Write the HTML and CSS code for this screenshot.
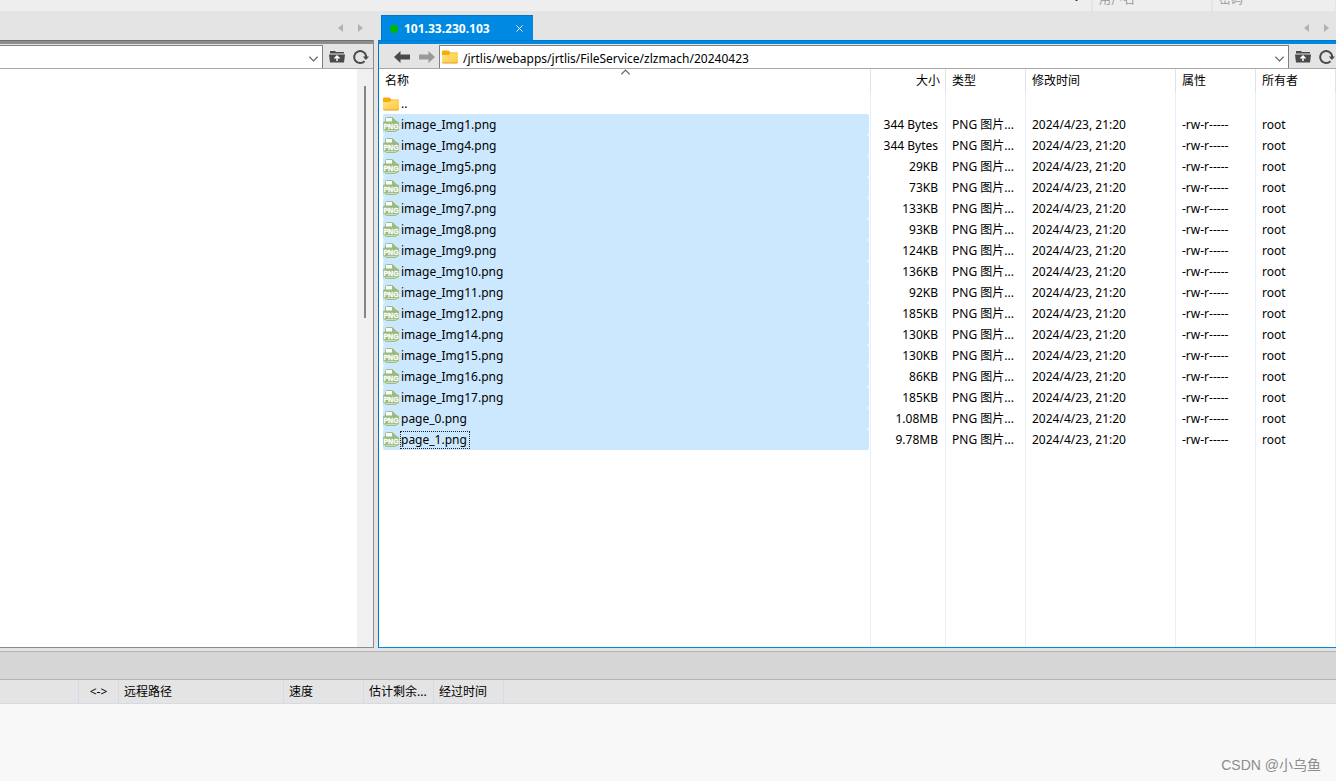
FILE: index.html
```html
<!DOCTYPE html>
<html lang="zh-CN">
<head>
<meta charset="utf-8">
<title>101.33.230.103</title>
<link rel="stylesheet" href="styles.css">
</head>
<body>
<svg class="sprite" aria-hidden="true">
  <defs>
    <linearGradient id="folder-fill" x1="0" y1="0" x2="1" y2="1">
      <stop offset="0" stop-color="#ffe28a"/>
      <stop offset="1" stop-color="#ffc93a"/>
    </linearGradient>
  </defs>
  <symbol id="folder" viewBox="0 0 16 14">
    <path d="M0 1.5Q0 .5 1 .5H6.500L8.500 2.500H15Q16 2.500 16 3.500V6H0Z" fill="#f5ac0c"/>
    <path d="M0 5H6.500L8.500 3.300H16V12Q16 13 15 13H1Q0 13 0 12Z" fill="url(#folder-fill)"/>
    <path d="M.3 12.500Q.5 13 1 13H15Q15.500 13 15.700 12.500" fill="none" stroke="#e0a020" stroke-width="1"/>
  </symbol>
  <symbol id="png" viewBox="0 0 16 16">
    <path d="M2.500 6V1.500Q2.500 .5 3.500 .5H9.500L13.500 4.500V14Q13.500 14.500 12.500 14.500H3.500Q2.500 14.500 2.500 14Z" fill="#fff" stroke="#9dbd83"/>
    <path d="M9 0L14 5H9Z" fill="#9dbd83"/>
    <rect x="0" y="4.500" width="16" height="9" rx="1.500" fill="#98ba7d"/>
    <text x="8" y="12" text-anchor="middle" class="png-label">PNG</text>
  </symbol>
  <symbol id="up" viewBox="0 0 16 13">
    <path d="M1 1H6L7 2H15V3.500H1Z" fill="#4a4a4a"/>
    <path d="M0 4.500H16L15 12.500H1Z" fill="#4a4a4a"/>
    <path d="M8 11V6.500M5.500 8.500L8 6L10.500 8.500" fill="none" stroke="#fff" stroke-width="1.500"/>
  </symbol>
  <symbol id="reload" viewBox="0 0 16 16">
    <path d="M11.500 12.300A6 6 0 1 1 13 6.500V8" fill="none" stroke="#4a4a4a" stroke-width="2"/>
    <path d="M9.800 7.500H16L12.900 11Z" fill="#4a4a4a"/>
  </symbol>
  <symbol id="back" viewBox="0 0 16 12">
    <path d="M0 6L6.500 0V3.500H16V8.500H6.500V12Z"/>
  </symbol>
  <symbol id="chevron" viewBox="0 0 8 5">
    <path d="M.3 .5L4 4.200L7.700 .5" fill="none" stroke="#666" stroke-width="1.100"/>
  </symbol>
  <symbol id="tri" viewBox="0 0 5 8">
    <path d="M0 4L5 0V8Z" fill="#b2b2b2"/>
  </symbol>
</svg>

<header class="quickbar">
  <button class="spin" aria-label="选项"><svg viewBox="0 0 3 1"><path d="M0 0H3L1.500 1Z"/></svg></button>
  <input class="field" type="text" placeholder="用户名" aria-label="用户名">
  <input class="field" type="password" placeholder="密码" aria-label="密码">
</header>

<main class="panes">
  <section class="pane">
    <div class="tabs">
      <div class="tab-nav">
        <button aria-label="上一个"><svg class="tri"><use href="#tri"/></svg></button>
        <button aria-label="下一个"><svg class="tri flip"><use href="#tri"/></svg></button>
      </div>
    </div>
    <div class="frame">
      <div class="toolbar">
        <div class="combo first">
          <input type="text" aria-label="本地路径">
          <button aria-label="展开"><svg class="chevron"><use href="#chevron"/></svg></button>
        </div>
        <button class="tool" aria-label="上级目录"><svg class="up"><use href="#up"/></svg></button>
        <button class="tool" aria-label="刷新"><svg class="reload"><use href="#reload"/></svg></button>
      </div>
      <div class="local-list"><div class="scrollbar"><div class="thumb"></div></div></div>
    </div>
  </section>

  <section class="pane active">
    <div class="tabs">
      <div class="tab"><span class="dot"></span><span class="host">101.33.230.103</span><button class="close" aria-label="关闭"><svg viewBox="0 0 7 7"><path d="M.5 .5L6.500 6.500M6.500 .5L.5 6.500"/></svg></button></div>
      <div class="tab-nav">
        <button aria-label="上一个"><svg class="tri"><use href="#tri"/></svg></button>
        <button aria-label="下一个"><svg class="tri flip"><use href="#tri"/></svg></button>
      </div>
    </div>
    <div class="frame">
      <div class="toolbar">
        <div class="history">
          <button aria-label="后退"><svg class="arrow"><use href="#back"/></svg></button>
          <button aria-label="前进"><svg class="arrow next flip"><use href="#back"/></svg></button>
        </div>
        <div class="combo">
          <svg class="folder"><use href="#folder"/></svg>
          <input type="text" aria-label="远程路径" value="/jrtlis/webapps/jrtlis/FileService/zlzmach/20240423">
          <button aria-label="展开"><svg class="chevron"><use href="#chevron"/></svg></button>
        </div>
        <button class="tool" aria-label="上级目录"><svg class="up"><use href="#up"/></svg></button>
        <button class="tool" aria-label="刷新"><svg class="reload"><use href="#reload"/></svg></button>
      </div>
      <div class="remote-list">
        <table class="files">
          <colgroup><col><col class="c-size"><col class="c-type"><col class="c-time"><col class="c-attr"><col class="c-owner"></colgroup>
          <thead><tr><th>名称<svg class="chevron sort"><use href="#chevron"/></svg></th><th class="num">大小</th><th>类型</th><th>修改时间</th><th>属性</th><th>所有者</th></tr></thead>
          <tbody>
            <tr><td><div class="name parent"><svg class="folder"><use href="#folder"/></svg><span>..</span></div></td><td></td><td></td><td></td><td></td><td></td></tr>
            <tr class="sel"><td><div class="name"><svg class="png"><use href="#png"/></svg><span>image_Img1.png</span></div></td><td class="num">344 Bytes</td><td>PNG 图片...</td><td>2024/4/23, 21:20</td><td>-rw-r-----</td><td>root</td></tr>
            <tr class="sel"><td><div class="name"><svg class="png"><use href="#png"/></svg><span>image_Img4.png</span></div></td><td class="num">344 Bytes</td><td>PNG 图片...</td><td>2024/4/23, 21:20</td><td>-rw-r-----</td><td>root</td></tr>
            <tr class="sel"><td><div class="name"><svg class="png"><use href="#png"/></svg><span>image_Img5.png</span></div></td><td class="num">29KB</td><td>PNG 图片...</td><td>2024/4/23, 21:20</td><td>-rw-r-----</td><td>root</td></tr>
            <tr class="sel"><td><div class="name"><svg class="png"><use href="#png"/></svg><span>image_Img6.png</span></div></td><td class="num">73KB</td><td>PNG 图片...</td><td>2024/4/23, 21:20</td><td>-rw-r-----</td><td>root</td></tr>
            <tr class="sel"><td><div class="name"><svg class="png"><use href="#png"/></svg><span>image_Img7.png</span></div></td><td class="num">133KB</td><td>PNG 图片...</td><td>2024/4/23, 21:20</td><td>-rw-r-----</td><td>root</td></tr>
            <tr class="sel"><td><div class="name"><svg class="png"><use href="#png"/></svg><span>image_Img8.png</span></div></td><td class="num">93KB</td><td>PNG 图片...</td><td>2024/4/23, 21:20</td><td>-rw-r-----</td><td>root</td></tr>
            <tr class="sel"><td><div class="name"><svg class="png"><use href="#png"/></svg><span>image_Img9.png</span></div></td><td class="num">124KB</td><td>PNG 图片...</td><td>2024/4/23, 21:20</td><td>-rw-r-----</td><td>root</td></tr>
            <tr class="sel"><td><div class="name"><svg class="png"><use href="#png"/></svg><span>image_Img10.png</span></div></td><td class="num">136KB</td><td>PNG 图片...</td><td>2024/4/23, 21:20</td><td>-rw-r-----</td><td>root</td></tr>
            <tr class="sel"><td><div class="name"><svg class="png"><use href="#png"/></svg><span>image_Img11.png</span></div></td><td class="num">92KB</td><td>PNG 图片...</td><td>2024/4/23, 21:20</td><td>-rw-r-----</td><td>root</td></tr>
            <tr class="sel"><td><div class="name"><svg class="png"><use href="#png"/></svg><span>image_Img12.png</span></div></td><td class="num">185KB</td><td>PNG 图片...</td><td>2024/4/23, 21:20</td><td>-rw-r-----</td><td>root</td></tr>
            <tr class="sel"><td><div class="name"><svg class="png"><use href="#png"/></svg><span>image_Img14.png</span></div></td><td class="num">130KB</td><td>PNG 图片...</td><td>2024/4/23, 21:20</td><td>-rw-r-----</td><td>root</td></tr>
            <tr class="sel"><td><div class="name"><svg class="png"><use href="#png"/></svg><span>image_Img15.png</span></div></td><td class="num">130KB</td><td>PNG 图片...</td><td>2024/4/23, 21:20</td><td>-rw-r-----</td><td>root</td></tr>
            <tr class="sel"><td><div class="name"><svg class="png"><use href="#png"/></svg><span>image_Img16.png</span></div></td><td class="num">86KB</td><td>PNG 图片...</td><td>2024/4/23, 21:20</td><td>-rw-r-----</td><td>root</td></tr>
            <tr class="sel"><td><div class="name"><svg class="png"><use href="#png"/></svg><span>image_Img17.png</span></div></td><td class="num">185KB</td><td>PNG 图片...</td><td>2024/4/23, 21:20</td><td>-rw-r-----</td><td>root</td></tr>
            <tr class="sel"><td><div class="name"><svg class="png"><use href="#png"/></svg><span>page_0.png</span></div></td><td class="num">1.08MB</td><td>PNG 图片...</td><td>2024/4/23, 21:20</td><td>-rw-r-----</td><td>root</td></tr>
            <tr class="sel"><td><div class="name"><svg class="png"><use href="#png"/></svg><span class="focus">page_1.png</span></div></td><td class="num">9.78MB</td><td>PNG 图片...</td><td>2024/4/23, 21:20</td><td>-rw-r-----</td><td>root</td></tr>
            <tr class="filler"><td></td><td></td><td></td><td></td><td></td><td></td></tr>
          </tbody>
        </table>
      </div>
    </div>
  </section>
</main>

<footer class="queue">
  <div class="queue-bar"></div>
  <table class="transfers">
    <colgroup><col class="q-local"><col class="q-dir"><col class="q-remote"><col class="q-speed"><col class="q-left"><col class="q-time"><col></colgroup>
    <thead><tr><th></th><th class="dir">&lt;-&gt;</th><th>远程路径</th><th>速度</th><th>估计剩余...</th><th>经过时间</th><th></th></tr></thead>
  </table>
  <div class="watermark">CSDN @小乌鱼</div>
</footer>
</body>
</html>
```
FILE: styles.css
```css
*, *::before { box-sizing: border-box; }

body {
  margin: 0;
  height: 100vh;
  display: flex;
  flex-direction: column;
  overflow: hidden;
  background: #e4e4e4;
  color: #000;
  font: 12px/16px "Noto Sans", "Noto Sans CJK SC", sans-serif;
}

button, input { font: inherit; color: inherit; border: 0; padding: 0; margin: 0; background: none; }
button { display: flex; align-items: center; justify-content: center; }
input { min-width: 0; outline: 0; }
svg { display: block; flex: none; }

.sprite { position: absolute; width: 0; height: 0; }
.png-label { font: bold 7px "Liberation Sans", sans-serif; fill: #fff; stroke: #fff; stroke-width: .3px; }
.flip { transform: scaleX(-1); }

/* Quick connect strip */
.quickbar {
  height: 11px;
  flex: none;
  display: flex;
  justify-content: flex-end;
  align-items: flex-end;
  overflow: hidden;
  background: #eee;
  padding-right: 4px;
  border-right: 1px solid #e4e4e4;
}
.quickbar .field { width: 120px; height: 24px; padding: 0 6px; border-left: 2px solid #e4e4e4; }
.quickbar .field::placeholder { color: #999; opacity: 1; }
.spin { height: 11px; width: 30px; align-items: flex-start; }
.spin svg { width: 3px; height: 1px; }

/* Panes */
.panes {
  flex: 1;
  min-height: 0;
  display: grid;
  grid-template-columns: 374fr 958fr;
  gap: 4px;
}
.pane { display: flex; flex-direction: column; min-width: 0; min-height: 0; --edge: #8c8c8c; --edge-dark: #707070; }
.pane.active { --edge: #0089e3; --edge-dark: #0078c8; }

.tabs { height: 29px; flex: none; display: flex; align-items: flex-end; padding-left: 3px; }
.tab-nav { margin-left: auto; display: flex; gap: 15px; padding-right: 11px; height: 25px; align-items: center; }
.active .tab-nav { padding-right: 7px; }
.tri { width: 5px; height: 8px; }

.tab {
  width: 152px;
  height: 25px;
  display: flex;
  align-items: center;
  padding: 1px 10px 0 8px;
  background: #0089e3;
  border: solid #0078c8;
  border-width: 1px 0 0 1px;
  color: #fff;
  font-weight: bold;
}
.dot { width: 8px; height: 8px; border-radius: 50%; background: #00b800; margin-right: 6px; }
.close { margin-left: auto; }
.close svg { width: 7px; height: 7px; fill: none; stroke: #fff; }

.frame {
  flex: 1;
  min-height: 0;
  display: flex;
  flex-direction: column;
  border: 1px solid var(--edge);
  border-left: 0;
  border-top: 0;
}
.frame::before { content: ""; height: 4px; flex: none; background: var(--edge); border-top: 1px solid var(--edge-dark); }
.active .frame { border-right: 0; border-left: 1px solid var(--edge-dark); }

.toolbar {
  height: 25px;
  flex: none;
  display: flex;
  align-items: center;
  padding: 1px 4px 0 0;
  border-bottom: 1px solid #a8a8a8;
}
.active .toolbar { padding-right: 1px; }
.history { display: flex; gap: 9px; padding: 0 4px 0 15px; }
.arrow { width: 16px; height: 12px; fill: #4a4a4a; }
.arrow.next { fill: #999; }
.combo {
  flex: 1;
  min-width: 0;
  align-self: stretch;
  display: flex;
  align-items: center;
  background: #fff;
  border: solid #808080;
  border-width: 1px 1px 0 1px;
  padding: 0 4px 0 2px;
}
.combo.first { border-left: 0; }
.combo input { flex: 1; padding: 3px 0 0 5px; }
.combo button { height: 22px; padding-top: 4px; }
.chevron { width: 9px; height: 6px; }
.tool { margin-left: 6px; }
.tool + .tool { margin-left: 8px; }
.up { width: 16px; height: 13px; }
.reload { width: 16px; height: 16px; }
.folder { width: 16px; height: 14px; }
.png { width: 16px; height: 16px; }

.local-list { flex: 1; display: flex; justify-content: flex-end; background: #fff; }
.scrollbar { width: 16px; background: #f0f0f0; padding: 17px 7px 0; }
.thumb { width: 2px; height: 42%; max-height: 232px; background: #858585; }

/* Remote file table */
.remote-list { flex: 1; min-height: 0; background: #fff; }
table { border-collapse: separate; border-spacing: 0; table-layout: fixed; width: 100%; }
th { font-weight: normal; text-align: left; }
th, td { white-space: nowrap; overflow: hidden; }
.files { height: 100%; }
.c-size { width: 75px; }
.c-type, .c-attr { width: 80px; }
.c-time { width: 150px; }
.c-owner { width: 80px; }
.files th { position: relative; height: 24px; padding: 0 6px; border-right: 1px solid #e2e2e2; }
.files td { height: 21px; padding: 0 6px; border-right: 1px solid #e6f0fa; }
.files td.num { text-align: right; padding-right: 7px; }
.files th.num { text-align: right; padding-right: 5px; }
.files td:first-child { padding: 0 1px 0 4px; }
.files .filler td { height: auto; }
.sort { position: absolute; top: 0; left: calc(50% - 4px); transform: scaleY(-1); }
.name { height: 21px; display: flex; align-items: center; gap: 1px; }
.name span { padding: 0 1px; line-height: 18px; }
.sel .name { background: #cce8ff; border-radius: 2px; }
.name .focus { outline: 1px dotted #222; outline-offset: -1px; padding-right: 3px; }

/* Transfer queue */
.queue { position: relative; height: 133px; flex: none; padding-top: 3px; display: flex; flex-direction: column; background: linear-gradient(#e4e4e4 3px, #f8f8f8 3px); }
.queue-bar { height: 29px; flex: none; background: #d6d6d6; border: solid #b4b4b4; border-width: 1px 0; }
.transfers th { height: 24px; padding: 0 5px; background: #e4e4e4; border: solid #d2dbe6; border-width: 0 1px 1px 0; }
.transfers .dir { text-align: center; padding: 0; }
.transfers th:last-child { border-right: 0; }
.q-local { width: 79px; }
.q-dir { width: 40px; }
.q-remote { width: 165px; }
.q-speed { width: 80px; }
.q-left, .q-time { width: 70px; }
.watermark {
  position: absolute;
  right: 15px;
  bottom: 8px;
  color: #8c8c8c;
  font: 14px/16px "Liberation Sans", "Noto Sans CJK SC", sans-serif;
}
```
